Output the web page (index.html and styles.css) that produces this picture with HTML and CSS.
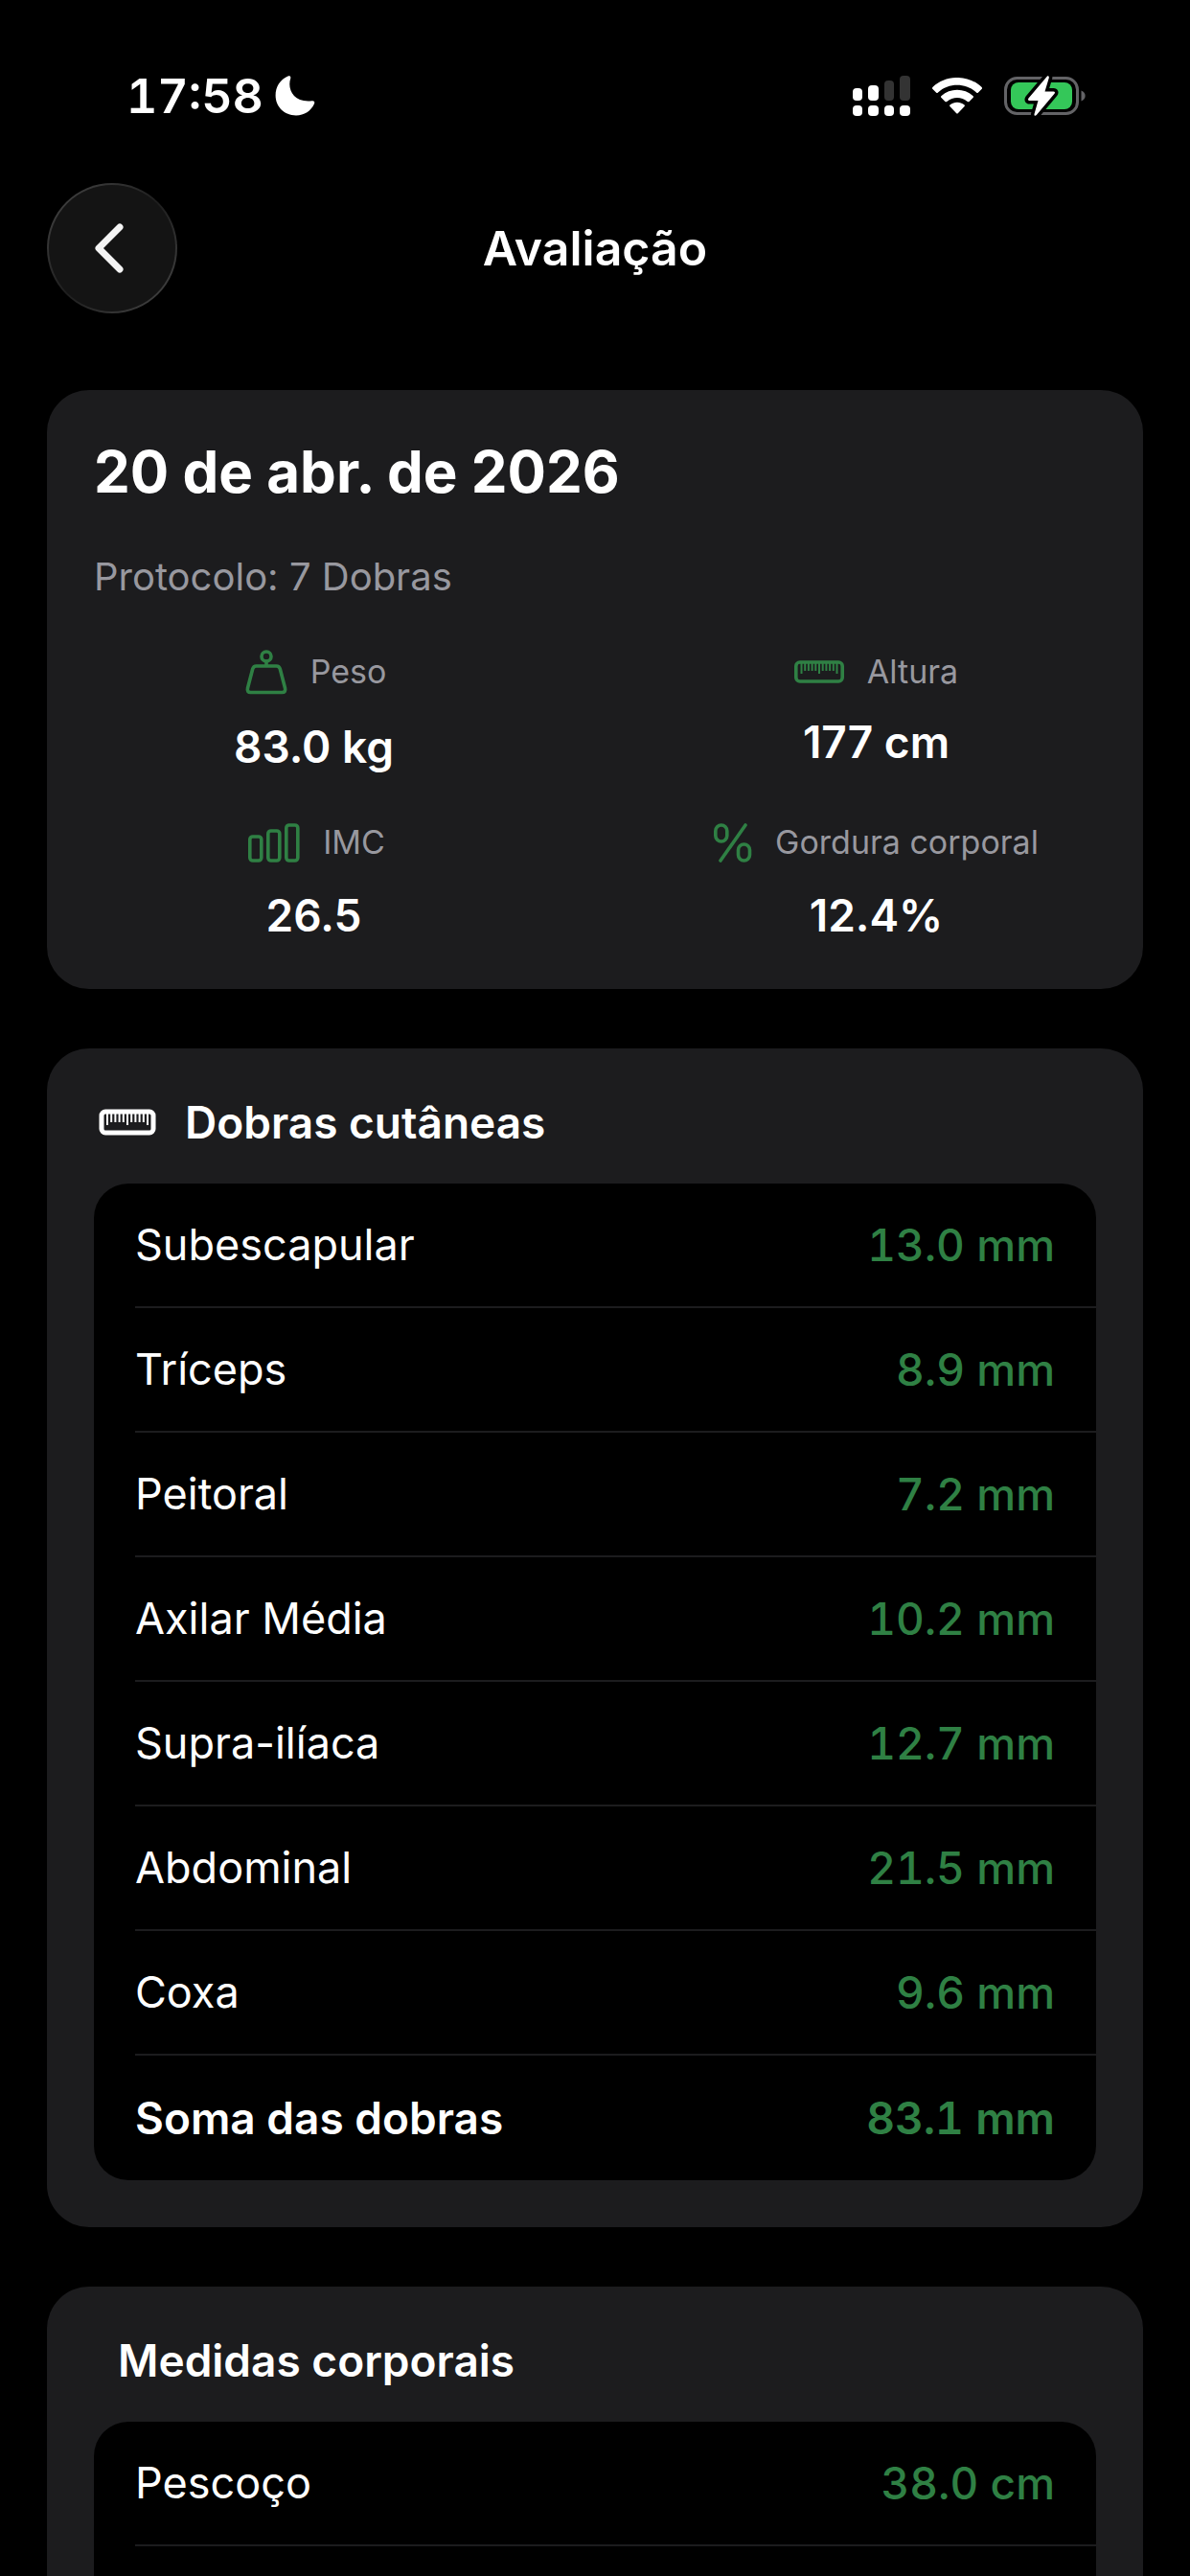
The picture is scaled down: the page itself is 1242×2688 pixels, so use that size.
FILE: index.html
```html
<!DOCTYPE html>
<html lang="pt-BR">
<head>
  <meta charset="UTF-8">
  <meta name="viewport" content="width=device-width, initial-scale=1.0">
  <title>Avaliação</title>
  <link rel="stylesheet" href="styles.css">
</head>
<body>

<div class="status-bar">
  <div class="status-left">
    <span class="time">17:58</span>
    <svg width="42" height="42" viewBox="0 0 42 42" fill="#fff" aria-hidden="true">
      <path d="M13.5 0.6C15.6-0.2 16.8 1 16.2 3C12.6 14 19.5 28.5 38.5 26.2C40.8 25.8 41.8 27.2 41 29.2C37.6 36.8 30.6 41.4 22 41.4C9.8 41.4 0.6 32.6 0.6 20.6C0.6 11.6 5.6 3.9 13.5 0.6Z"/>
    </svg>
  </div>
  <div class="status-right">
    <svg width="60" height="42" viewBox="0 0 60 42" fill="#fff" aria-hidden="true">
      <rect x="0" y="13" width="10" height="13" rx="4"/>
      <rect x="16" y="10" width="11" height="16" rx="4"/>
      <rect x="33" y="5" width="10" height="21" rx="4" fill="#333"/>
      <rect x="49" y="0" width="11" height="26" rx="4" fill="#333"/>
      <rect x="0" y="31" width="10" height="11" rx="4"/>
      <rect x="16" y="31" width="11" height="11" rx="4"/>
      <rect x="33" y="31" width="10" height="11" rx="4"/>
      <rect x="49" y="31" width="11" height="11" rx="4"/>
    </svg>
    <svg width="52" height="38" viewBox="0 0 52 38" fill="#fff" aria-hidden="true">
      <path d="M0.6 9.8C14-3.3 38-3.3 51.4 9.8C52.2 10.6 52.2 11.3 51.5 12L48 15.5C47.3 16.2 46.7 16.2 46 15.5C35 5.2 17 5.2 6 15.5C5.3 16.2 4.7 16.2 4 15.5L0.5 12C-0.2 11.3-0.2 10.6 0.6 9.8Z"/>
      <path d="M9.6 19C18.5 10.6 33.5 10.6 42.4 19C43.2 19.7 43.2 20.4 42.5 21.1L38.8 24.8C38.1 25.5 37.5 25.5 36.7 24.9C30.5 19.6 21.5 19.6 15.3 24.9C14.5 25.5 13.9 25.5 13.2 24.8L9.5 21.1C8.8 20.4 8.8 19.7 9.6 19Z"/>
      <path d="M18.7 28.2C22.8 24.8 29.2 24.8 33.3 28.2C34.1 28.9 34.1 29.6 33.4 30.3L27 37C26.3 37.7 25.7 37.7 25 37L18.6 30.3C17.9 29.6 17.9 28.9 18.7 28.2Z"/>
    </svg>
    <svg width="86" height="44" viewBox="0 0 86 44" aria-hidden="true">
      <rect x="1.5" y="3.5" width="75" height="37" rx="12" fill="none" stroke="#636366" stroke-width="3"/>
      <path d="M80.5 16.5C86 18.5 86 25.5 80.5 27.5Z" fill="#636366"/>
      <rect x="7" y="8" width="64" height="28" rx="8" fill="#34c759"/>
      <path d="M45 1.5L25.5 24.5C24.5 26 25 27 26.5 27H35.5L31.5 41C31.2 43 32.5 43.2 33.8 42L52.5 19.8C53.5 18.4 53 17.4 51.5 17.4H42.5L46.8 3.2C47.1 1.3 46 0.7 45 1.5Z" fill="#fff" stroke="#000" stroke-width="7" stroke-linejoin="round" paint-order="stroke"/>
    </svg>
  </div>
</div>

<header class="header">
  <button class="back" type="button" aria-label="Voltar">
    <svg width="32" height="52" viewBox="0 0 32 52" fill="none" stroke="#f4f4f4" stroke-width="7" stroke-linecap="round" stroke-linejoin="round" aria-hidden="true">
      <path d="M27 4L5 26L27 48"/>
    </svg>
  </button>
  <h1 class="header-title">Avaliação</h1>
</header>

<main class="content">
  <section class="card summary">
    <h2 class="date">20 de abr. de 2026</h2>
    <p class="protocol">Protocolo: 7 Dobras</p>
    <div class="metrics">
      <div class="metric">
        <div class="metric-label">
          <svg class="icon" width="48" height="50" viewBox="-4 0 48 50" aria-hidden="true">
            <circle cx="22" cy="9" r="5"/>
            <path d="M22 14V19M11.5 19H32.5C34.5 19 35.700 20 36.3 22L41.5 42C42.2 45 41 46.5 38.5 46.5H5.5C3 46.5 1.8 45 2.5 42L7.7 22C8.3 20 9.5 19 11.5 19Z"/>
          </svg>
          <span>Peso</span>
        </div>
        <strong class="metric-value">83.0 kg</strong>
      </div>
      <div class="metric">
        <div class="metric-label">
          <svg class="icon" width="52" height="24" viewBox="0 0 52 24" aria-hidden="true">
            <rect x="1.8" y="2" width="48.4" height="20" rx="4"/>
            <path class="ticks" d="M7.5 3V14M11.2 3V11M14.9 3V11M18.6 3V11M22.3 3V11M26 3V14M29.7 3V11M33.4 3V11M37.1 3V11M40.8 3V11M44.5 3V14"/>
          </svg>
          <span>Altura</span>
        </div>
        <strong class="metric-value">177 cm</strong>
      </div>
      <div class="metric">
        <div class="metric-label">
          <svg class="icon" width="60" height="46" viewBox="-6 0 60 46" aria-hidden="true">
            <rect x="1.8" y="17" width="12" height="25" rx="3"/>
            <rect x="20.8" y="11" width="12" height="31" rx="3"/>
            <rect x="39.8" y="5" width="12" height="37" rx="3"/>
          </svg>
          <span>IMC</span>
        </div>
        <strong class="metric-value">26.5</strong>
      </div>
      <div class="metric">
        <div class="metric-label">
          <svg class="icon" width="40" height="46" viewBox="0 0 40 46" aria-hidden="true">
            <rect x="1.8" y="5" width="12" height="17" rx="6"/>
            <rect x="25.5" y="25" width="12" height="17" rx="6"/>
            <path d="M33 5L7 42"/>
          </svg>
          <span>Gordura corporal</span>
        </div>
        <strong class="metric-value">12.4%</strong>
      </div>
    </div>
  </section>

  <section class="card">
    <div class="section-head">
      <svg class="ruler" width="70" height="28" viewBox="0 0 70 28" aria-hidden="true">
        <rect x="8" y="3" width="54" height="22" rx="4"/>
        <path class="ticks" d="M14 3V17M18.2 3V14M22.4 3V14M26.6 3V14M30.8 3V14M35 3V17M39.2 3V14M43.4 3V14M47.6 3V14M51.8 3V14M56 3V17"/>
      </svg>
      <h2 class="section-title">Dobras cutâneas</h2>
    </div>
    <div class="list">
      <table>
        <tr><th scope="row">Subescapular</th><td>13.0 mm</td></tr>
        <tr><th scope="row">Tríceps</th><td>8.9 mm</td></tr>
        <tr><th scope="row">Peitoral</th><td>7.2 mm</td></tr>
        <tr><th scope="row">Axilar Média</th><td>10.2 mm</td></tr>
        <tr><th scope="row">Supra-ilíaca</th><td>12.7 mm</td></tr>
        <tr><th scope="row">Abdominal</th><td>21.5 mm</td></tr>
        <tr><th scope="row">Coxa</th><td>9.6 mm</td></tr>
        <tr class="total"><th scope="row">Soma das dobras</th><td>83.1 mm</td></tr>
      </table>
    </div>
  </section>

  <section class="card">
    <div class="section-head">
      <h2 class="section-title">Medidas corporais</h2>
    </div>
    <div class="list">
      <table>
        <tr><th scope="row">Pescoço</th><td>38.0 cm</td></tr>
        <tr><th scope="row"></th><td></td></tr>
      </table>
    </div>
  </section>
</main>

</body>
</html>
```
FILE: styles.css
```css
:root {
  --bg-color: #000;
  --card-bg: #1c1c1e;
  --text-color: #fff;
  --muted: #98989f;
  --green: #2f8044;
  --space: 49px;
}
* { margin: 0; padding: 0; box-sizing: border-box; }
body {
  background: var(--bg-color);
  color: var(--text-color);
  font-family: Inter, "Liberation Sans", sans-serif;
  height: 100vh;
  display: flex;
  flex-direction: column;
  overflow: hidden;
}
svg { display: block; flex: none; }

.status-bar {
  display: flex;
  align-items: center;
  justify-content: space-between;
  padding: 70px 108px 61px 132px;
}
.status-left { display: flex; align-items: center; gap: 12px; }
.status-right { display: flex; align-items: center; gap: 23px; }
.time { font-size: 50px; line-height: 60px; font-weight: 600; font-variant-numeric: tabular-nums; }

.header {
  display: grid;
  grid-template-columns: 136px 1fr 136px;
  align-items: center;
  padding: 0 var(--space);
}
.back {
  display: flex;
  align-items: center;
  justify-content: center;
  width: 136px;
  height: 136px;
  padding-right: 6px;
  border: 2px solid transparent;
  border-radius: 50%;
  background:
    linear-gradient(#141414, #141414) padding-box,
    linear-gradient(135deg, #484848, #1e1e1e 50%, #484848) border-box;
  cursor: pointer;
}
.header-title { font-size: 50px; line-height: 60px; font-weight: 600; text-align: center; }

.content {
  flex: 1;
  min-height: 0;
  overflow-y: auto;
  scrollbar-width: none;
  padding: 80px var(--space) var(--space);
}
.card {
  background: var(--card-bg);
  border-radius: 44px;
  padding: var(--space);
  margin-bottom: 62px;
}

.summary { display: flex; flex-direction: column; gap: var(--space); }
.date { font-size: 60px; line-height: 72px; font-weight: 700; }
.protocol { font-size: 40px; line-height: 50px; color: var(--muted); }
.metrics {
  display: grid;
  grid-template-columns: 1fr 1fr;
  gap: var(--space) 128px;
  align-items: center;
}
.metric { display: flex; flex-direction: column; align-items: center; gap: 25px; }
.metric-label {
  display: flex;
  align-items: center;
  gap: 24px;
  font-size: 34px;
  line-height: 40px;
  color: var(--muted);
  white-space: nowrap;
}
.metric-value { font-size: 46px; line-height: 56px; font-weight: 600; }
.icon { fill: none; stroke: var(--green); stroke-width: 3.6; stroke-linecap: round; stroke-linejoin: round; }
.icon .ticks { stroke-width: 2; stroke-linecap: butt; }

.section-head { display: flex; align-items: center; margin-bottom: 36px; }
.section-title { font-size: 46px; line-height: 56px; font-weight: 600; padding-left: 25px; }
.ruler { fill: none; stroke: #fff; stroke-width: 5; }
.ruler .ticks { stroke-width: 2; }

.list { background: var(--bg-color); border-radius: 36px; padding-left: 43px; }
.list table { width: 100%; border-spacing: 0; }
.list th, .list td {
  height: 130px;
  border-bottom: 2px solid var(--card-bg);
  font-size: 46px;
  line-height: 56px;
}
.list th { text-align: left; font-weight: 400; font-size: 45px; }
.list td {
  text-align: right;
  font-weight: 500;
  font-variant-numeric: tabular-nums;
  color: var(--green);
  padding-right: 43px;
}
.list tr:last-child th, .list tr:last-child td { border-bottom: none; }
.list .total th, .list .total td { font-weight: 600; }
.list .total th { font-size: 46px; }
```
